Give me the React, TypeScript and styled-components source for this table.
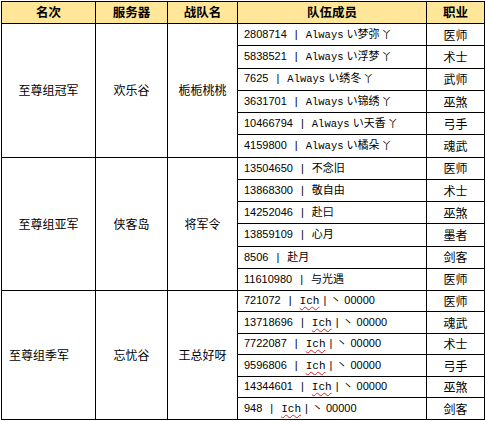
import React from 'react';
import styled, {createGlobalStyle} from "styled-components";

type Member = { id: string; name: React.ReactNode; role: string };
type Group = { rank: string; server: string; team: string; rowH: number; alignLeft?: boolean; members: Member[] };

const Always = ({n}: { n: string }) => (
    <>
        <Latin>Always</Latin> い{n}<Small>丫</Small>
    </>
);

const Ich = () => (
    <>
        <Spell>Ich</Spell><Sep $gap={4}>|</Sep>丶 00000
    </>
);

const groups: Group[] = [
    {
        rank: '至尊组冠军', server: '欢乐谷', team: '栀栀桃桃', rowH: 22.3,
        members: [
            {id: '2808714', name: <Always n="梦弥"/>, role: '医师'},
            {id: '5838521', name: <Always n="浮梦"/>, role: '术士'},
            {id: '7625', name: <Always n="绣冬"/>, role: '武师'},
            {id: '3631701', name: <Always n="锦绣"/>, role: '巫煞'},
            {id: '10466794', name: <Always n="天香"/>, role: '弓手'},
            {id: '4159800', name: <Always n="橘朵"/>, role: '魂武'},
        ]
    },
    {
        rank: '至尊组亚军', server: '侠客岛', team: '将军令', rowH: 22.2,
        members: [
            {id: '13504650', name: '不念旧', role: '医师'},
            {id: '13868300', name: '敬自由', role: '术士'},
            {id: '14252046', name: '赴曰', role: '巫煞'},
            {id: '13859109', name: '心月', role: '墨者'},
            {id: '8506', name: '赴月', role: '剑客'},
            {id: '11610980', name: '与光遇', role: '医师'},
        ]
    },
    {
        rank: '至尊组季军', server: '忘忧谷', team: '王总好呀', rowH: 21.5, alignLeft: true,
        members: [
            {id: '721072', name: <Ich/>, role: '医师'},
            {id: '13718696', name: <Ich/>, role: '魂武'},
            {id: '7722087', name: <Ich/>, role: '术士'},
            {id: '9596806', name: <Ich/>, role: '弓手'},
            {id: '14344601', name: <Ich/>, role: '巫煞'},
            {id: '948', name: <Ich/>, role: '剑客'},
        ]
    },
];

export default function App() {
    return (
        <>
            <GlobalStyle/>
            <Page>
                <Table>
                    <colgroup>
                        <col style={{width: 94}}/>
                        <col style={{width: 72}}/>
                        <col style={{width: 70}}/>
                        <col style={{width: 189}}/>
                        <col style={{width: 58}}/>
                    </colgroup>
                    <thead>
                    <HeadRow>
                        <Th>名次</Th>
                        <Th>服务器</Th>
                        <Th>战队名</Th>
                        <Th>队伍成员</Th>
                        <Th>职业</Th>
                    </HeadRow>
                    </thead>
                    <tbody>
                    {groups.map(g => g.members.map((m, i) => (
                        <Row key={g.rank + i} $h={g.rowH}>
                            {i === 0 && (
                                <>
                                    <GroupCell rowSpan={6} $left={g.alignLeft}>{g.rank}</GroupCell>
                                    <GroupCell rowSpan={6}>{g.server}</GroupCell>
                                    <GroupCell rowSpan={6}>{g.team}</GroupCell>
                                </>
                            )}
                            <MemberCell>{m.id}<Sep $gap={8}>|</Sep>{m.name}</MemberCell>
                            <RoleCell>{m.role}</RoleCell>
                        </Row>
                    )))}
                    </tbody>
                </Table>
            </Page>
        </>
    );
}

const GlobalStyle = createGlobalStyle`
    html, body {
        margin: 0;
        background: #ffffff;
    }
    body {
        font-family: "Liberation Sans", "Noto Sans CJK SC", sans-serif;
        color: #000;
    }
`

const Page = styled.div`
    padding: 1px 0 0 1px;
`

const Table = styled.table`
    border-collapse: collapse;
    table-layout: fixed;
    width: 484px;
`

const HeadRow = styled.tr`
    height: 22px;
    background: #ffe699;
`

const Th = styled.th`
    border: 1px solid #000;
    padding: 0;
    font-family: "Noto Sans CJK SC", sans-serif;
    font-size: 12.5px;
    font-weight: 700;
    text-align: center;
    line-height: 1;
`

const Row = styled.tr<{ $h: number }>`
    height: ${p => p.$h}px;
`

const Cell = styled.td`
    border: 1px solid #000;
    padding: 0;
    line-height: 1;
    white-space: nowrap;
`

const GroupCell = styled(Cell)<{ $left?: boolean }>`
    text-align: ${p => p.$left ? 'left' : 'center'};
    padding-left: ${p => p.$left ? '7px' : '0'};
    font-family: "Noto Sans CJK SC", sans-serif;
    font-size: 12px;
`

const MemberCell = styled(Cell)`
    padding-left: 6px;
    font-size: 11px;
`

const RoleCell = styled(Cell)`
    text-align: center;
    font-family: "Noto Sans CJK SC", sans-serif;
    font-size: 12px;
`

const Sep = styled.span<{ $gap: number }>`
    margin: 0 ${p => p.$gap}px;
`

const Latin = styled.span`
    font-family: "Liberation Mono", monospace;
    font-size: 10.5px;
`

const Small = styled.span`
    font-size: 10px;
    margin-left: 2px;
`

const Spell = styled.span`
    font-family: "Liberation Mono", monospace;
    font-size: 11px;
    text-decoration: underline wavy #e0201c;
    text-decoration-thickness: 1px;
    text-underline-offset: 2px;
`
